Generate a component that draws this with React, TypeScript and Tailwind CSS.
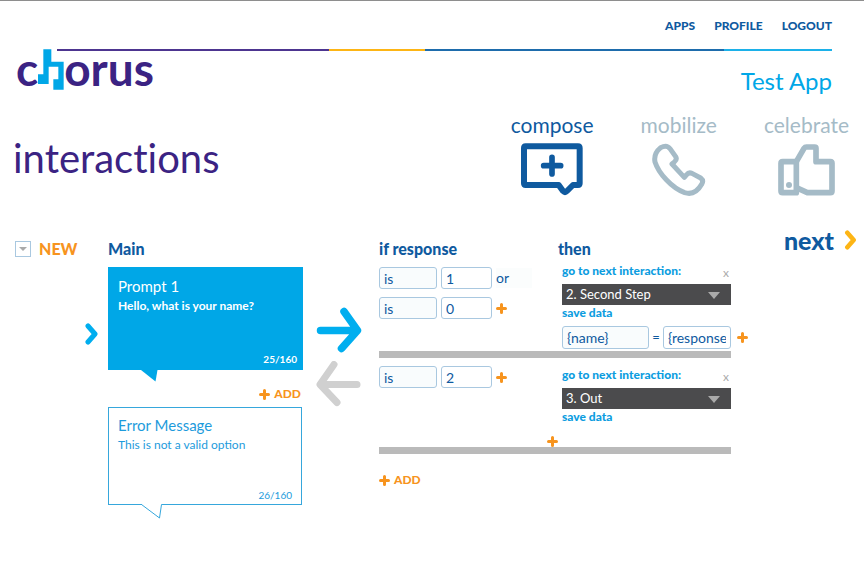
import type { ReactNode } from "react";

function Plus() {
  return (
    <svg className="size-[11px] shrink-0" viewBox="0 0 11 11" fill="none" stroke="#f7941e" strokeWidth="3" strokeLinecap="round" aria-hidden="true">
      <path d="M5.5 1.5v8M1.500 5.500h8" />
    </svg>
  );
}

function AddButton() {
  return (
    <button type="button" className="flex items-center gap-1 text-[12px] leading-4 font-black text-[#f7941e]">
      <Plus />
      ADD
    </button>
  );
}

function Logo() {
  return (
    <a href="#home" aria-label="chorus" className="flex w-fit items-start text-[46px] leading-[40px] font-bold text-[#3b2383]">
      <span>c</span>
      <svg className="h-[41px] w-[26px]" viewBox="117 147 78 123" aria-hidden="true">
        <path
          fill="#00a7e7"
          d="M133 148H157V185H194V269H163V238H178V200H149V252H117V223H133Z"
        />
      </svg>
      <span>orus</span>
    </a>
  );
}

function Tab({ label, active, children }: { label: string; active?: boolean; children: ReactNode }) {
  return (
    <a
      href={`#${label}`}
      className={`flex flex-col items-center gap-1 text-[21px] leading-7 ${active ? "text-[#0f5a9f]" : "text-[#a5bbc7]"}`}
    >
      {label}
      {children}
    </a>
  );
}

function ComposeIcon() {
  return (
    <svg className="h-[53px] w-[62px]" viewBox="90 130 186 159" fill="none" stroke="currentColor" strokeLinejoin="round" strokeLinecap="round" aria-hidden="true">
      <path strokeWidth="18" d="M104 140H261Q266 140 266 145V251Q266 256 261 256H246L228 274Q222 280 216 274L203 256H104Q99 256 99 251V145Q99 140 104 140Z" />
      <path strokeWidth="17" d="M183 173V223M158 198H209" />
    </svg>
  );
}

function PhoneIcon() {
  return (
    <svg className="h-[53px] w-[54px]" viewBox="486 133 162 159" fill="none" stroke="currentColor" strokeWidth="15" strokeLinejoin="round" aria-hidden="true">
      <path d="M512 147Q530 137 540 150L557 174Q562 182 553 190L546 196L583 236L590 228Q596 220 606 224L632 238Q642 246 635 257C622 280 604 288 584 282C545 268 506 224 495 190Q490 165 512 147Z" />
    </svg>
  );
}

function ThumbIcon() {
  return (
    <svg className="h-[53px] w-[57px]" viewBox="863 134 171 159" fill="none" stroke="currentColor" strokeWidth="17" strokeLinejoin="round" aria-hidden="true">
      <path d="M877 190H918V283H877Q872 283 872 278V195Q872 190 877 190Z" />
      <path d="M918 190L941 150Q944 146 948 146H973Q977 146 977 150V190H1020Q1025 190 1025 195V278Q1025 283 1020 283H951L918 268" />
      <circle cx="896" cy="260" r="9" fill="currentColor" stroke="none" />
    </svg>
  );
}

const fieldBox = "min-w-0 rounded-[3px] border border-[#a9c8e0] px-1 text-[14px] text-[#0f5a9f]";

function Condition({ id, value, joiner }: { id: string; value: string; joiner?: boolean }) {
  return (
    <div className="flex h-[22px] items-center gap-1">
      <input aria-label={`Comparison ${id}`} defaultValue="is" className={`${fieldBox} h-[22px] w-[58px] bg-[#f9fcfd]`} />
      <input aria-label={`Value ${id}`} defaultValue={value} className={`${fieldBox} h-[22px] w-[51px] bg-white`} />
      {joiner ? (
        <span className="h-5 w-9 bg-[#fbfdfd] text-[14px] leading-5 text-[#0f5a9f]">or</span>
      ) : (
        <button type="button" aria-label="Add alternative">
          <Plus />
        </button>
      )}
    </div>
  );
}

function Target({ id, step }: { id: string; step: string }) {
  return (
    <div className="font-black text-[#0d9ddf]">
      <div className="flex h-5 items-start justify-between text-[12px] leading-[14px]">
        <label htmlFor={id}>go to next interaction:</label>
        <button type="button" aria-label="Remove" className="px-0.5 pt-0.5 font-normal text-[#aaaaaa]">
          x
        </button>
      </div>
      <div className="relative">
        <select id={id} defaultValue={step} className="block h-[21px] w-full appearance-none bg-[#4b4b4d] px-1 text-[13px] font-normal text-white">
          <option>{step}</option>
        </select>
        <svg className="pointer-events-none absolute top-2 right-[11px] h-[7px] w-3" viewBox="0 0 12 7" fill="#aaaaaa" aria-hidden="true">
          <path d="M0 0H12L6 7Z" />
        </svg>
      </div>
      <div className="text-[12px] leading-4">save data</div>
    </div>
  );
}

function Chevron({ className }: { className: string }) {
  return (
    <svg className={className} viewBox="0 0 13 22" fill="none" stroke="currentColor" strokeWidth="5" aria-hidden="true">
      <path strokeLinecap="round" strokeLinejoin="round" d="M3 3L10 11L3 19" />
    </svg>
  );
}

export default function App() {
  return (
    <div className="min-h-screen border-t border-[#8e8e8e] bg-white font-['Lato',sans-serif]">
      <header>
        <nav className="flex justify-end gap-[19px] pt-[17px] pr-8 text-[12px] leading-4 font-black text-[#0f5a9f]">
          <a href="#apps">APPS</a>
          <a href="#profile">PROFILE</a>
          <a href="#logout">LOGOUT</a>
        </nav>
        <div className="mt-[15px] mr-8 ml-[57px] flex h-0.5">
          <div className="flex-[272] bg-[#4d3590]" />
          <div className="flex-[96] bg-[#fdb515]" />
          <div className="flex-[299] bg-[#1e6cac]" />
          <div className="flex-[108] bg-[#1cb1e9]" />
        </div>
        <div className="-mt-0.5 flex justify-between pr-8 pl-4">
          <Logo />
          <div className="pt-4 text-[24px] leading-8 text-[#00a7e7]">Test App</div>
        </div>
      </header>

      <div className="mt-[14px] flex justify-between pr-[15px] pl-[13px]">
        <h1 className="pt-[22px] text-[40px] leading-[50px] text-[#3b2383] [font-variant-ligatures:none]">interactions</h1>
        <nav className="flex gap-[47px]">
          <Tab label="compose" active>
            <ComposeIcon />
          </Tab>
          <Tab label="mobilize">
            <PhoneIcon />
          </Tab>
          <Tab label="celebrate">
            <ThumbIcon />
          </Tab>
        </nav>
      </div>

      <main className="mt-10 grid grid-cols-[93px_195fr_76px_369fr_116px] pl-[15px] text-[#0f5a9f]">
        <section>
          <div className="flex h-[26px] items-center gap-2">
            <div className="relative">
              <select id="new-kind" className="block size-4 appearance-none border border-[#a9c8e0] bg-white text-transparent">
                <option>Interaction</option>
              </select>
              <svg className="pointer-events-none absolute top-1.5 left-1 h-1 w-2" viewBox="0 0 8 4" fill="#aaaaaa" aria-hidden="true">
                <path d="M0 0H8L4 4Z" />
              </svg>
            </div>
            <label htmlFor="new-kind" className="text-[16px] leading-5 font-black text-[#f7941e]">
              NEW
            </label>
          </div>
          <div className="mt-[61px] flex justify-end pr-2.5 text-[#00aeef]">
            <Chevron className="h-[22px] w-[13px]" />
          </div>
        </section>

        <section>
          <h2 className="h-[26px] text-[16px] leading-[26px] font-black">Main</h2>
          <div className="mt-[5px] flex h-[103px] flex-col bg-[#00a7e7] px-[10px] pt-[9px] pb-1 text-white">
            <h3 className="text-[15px] leading-5">Prompt 1</h3>
            <p className="text-[12px] leading-5 font-bold">Hello, what is your name?</p>
            <p className="mt-auto -mr-1 text-right text-[10px] leading-[14px] font-bold">25/160</p>
          </div>
          <svg className="ml-8 block h-3 w-[18px]" viewBox="0 0 18 12" fill="#00a7e7" aria-hidden="true">
            <path d="M1 0H17.500L15.500 11.500Z" />
          </svg>
          <div className="mt-1 flex justify-end pr-0.5">
            <AddButton />
          </div>
          <div className="mt-[5px] mr-px flex h-[98px] flex-col border border-[#36a7dc] px-[9px] pt-[7px] pb-0.5 text-[#1d9bdc]">
            <h3 className="text-[15px] leading-5">Error Message</h3>
            <p className="text-[12px] leading-5">This is not a valid option</p>
            <p className="mt-auto text-right text-[10px] leading-[14px]">26/160</p>
          </div>
          <svg className="-mt-px ml-8 block h-[15px] w-6" viewBox="0 0 24 15" fill="none" aria-hidden="true">
            <path fill="white" d="M2 0H21.500V1H2Z" />
            <path stroke="#36a7dc" d="M1.500 0.500L19.500 14L21.500 0.500" />
          </svg>
        </section>

        <div className="flex flex-col items-center gap-2 pt-[71px] pr-1">
          <svg className="h-[46px] w-[46px]" viewBox="0 0 46 46" fill="none" stroke="#00aeef" strokeWidth="7.500" strokeLinecap="round" strokeLinejoin="round" aria-hidden="true">
            <path d="M4.500 23.500H41M28 4.500L41.500 23.500L25.500 41.500" />
          </svg>
          <svg className="h-[46px] w-[46px]" viewBox="0 0 46 46" fill="none" stroke="#d0d0d0" strokeWidth="7" strokeLinecap="round" strokeLinejoin="round" aria-hidden="true">
            <path d="M41 23.500H4.500M18 3.500L4 23.500L21 41.500" />
          </svg>
        </div>

        <section>
          <div className="grid h-[26px] grid-cols-[1fr_173px_17px] text-[16px] leading-[26px] font-black">
            <h2>if response</h2>
            <h2>then</h2>
          </div>

          <div className="mt-0.5 grid grid-cols-[1fr_15px_169px_17px]">
            <div className="col-span-2 flex flex-col gap-2 pt-[3px]">
              <Condition id="1a" value="1" joiner />
              <Condition id="1b" value="0" />
            </div>
            <Target id="target-1" step="2. Second Step" />
            <div className="col-span-2 col-start-3 mt-[5px] flex items-center">
              <input aria-label="Variable" defaultValue="{name}" className={`${fieldBox} h-[23px] w-[87px] bg-[#f9fcfd]`} />
              <span className="w-3.5 text-center text-[13px]">=</span>
              <input aria-label="Saved value" defaultValue="{response}" className={`${fieldBox} h-[23px] flex-1 bg-white`} />
              <button type="button" aria-label="Add saved value" className="ml-1.5">
                <Plus />
              </button>
            </div>
          </div>
          <div className="mt-0.5 mr-[17px] h-[7px] bg-[#bababa]" />

          <div className="mt-2 grid grid-cols-[1fr_15px_169px_17px]">
            <div className="col-span-2">
              <Condition id="2" value="2" />
            </div>
            <div className="pt-0.5">
              <Target id="target-2" step="3. Out" />
            </div>
            <button type="button" aria-label="Add saved value" className="col-start-2 mt-[11px] w-fit">
              <Plus />
            </button>
          </div>
          <div className="mr-[17px] h-[7px] bg-[#bababa]" />
          <div className="mt-[18px]">
            <AddButton />
          </div>
        </section>

        <button type="button" className="-mt-2.5 flex h-7 items-center justify-end gap-2.5 self-start pr-[7px] text-[25px] leading-7 font-black">
          next
          <Chevron className="h-5 w-[13px] text-[#fdb515]" />
        </button>
      </main>
    </div>
  );
}
